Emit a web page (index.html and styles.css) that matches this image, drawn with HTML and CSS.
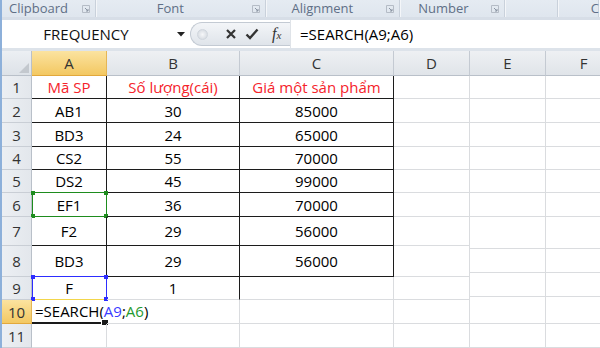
FILE: index.html
```html
<!DOCTYPE html>
<html lang="vi">
<head>
    <meta charset="UTF-8">
    <title>SEARCH</title>
    <link rel="stylesheet" href="styles.css">
</head>
<body>
<div class="app">
    <div class="ribbon">
        <div class="group g-clip"><span class="glabel">Clipboard</span><svg class="launch" width="8" height="8" viewBox="0 0 8 8"><path d="M0.5 0.5h7v7h-7z" fill="none" stroke="#b5bcc6"/><path d="M3 3l3 3M6 4v2h-2" fill="none" stroke="#8a94a2"/></svg></div>
        <div class="group g-font"><span class="glabel">Font</span><svg class="launch" width="8" height="8" viewBox="0 0 8 8"><path d="M0.5 0.5h7v7h-7z" fill="none" stroke="#b5bcc6"/><path d="M3 3l3 3M6 4v2h-2" fill="none" stroke="#8a94a2"/></svg></div>
        <div class="group g-align"><span class="glabel">Alignment</span><svg class="launch" width="8" height="8" viewBox="0 0 8 8"><path d="M0.5 0.5h7v7h-7z" fill="none" stroke="#b5bcc6"/><path d="M3 3l3 3M6 4v2h-2" fill="none" stroke="#8a94a2"/></svg></div>
        <div class="group g-num"><span class="glabel">Number</span><svg class="launch" width="8" height="8" viewBox="0 0 8 8"><path d="M0.5 0.5h7v7h-7z" fill="none" stroke="#b5bcc6"/><path d="M3 3l3 3M6 4v2h-2" fill="none" stroke="#8a94a2"/></svg></div>
        <div class="group g-blank"></div>
        <div class="group g-last"><span class="glabel">C</span></div>
    </div>

    <div class="fbar">
        <div class="namebox">
            <span class="nametext">FREQUENCY</span>
            <svg class="drop" width="8" height="5" viewBox="0 0 8 5"><path d="M0 0h8l-4 4.5z" fill="#222"/></svg>
        </div>
        <div class="fbtns">
            <span class="grip"></span>
            <svg class="ico" width="12" height="12" viewBox="0 0 12 12"><path d="M2 2l8 8M10 2l-8 8" stroke="#333" stroke-width="2.2"/></svg>
            <svg class="ico" width="14" height="12" viewBox="0 0 14 12"><path d="M1.5 6.5l3.5 3.5 7.5-8.5" fill="none" stroke="#333" stroke-width="2.4"/></svg>
            <span class="fx">f<small>x</small></span>
        </div>
        <div class="formula">=SEARCH(A9;A6)</div>
    </div>

    <div class="sheet">
        <div class="c corner"><svg width="10" height="10" viewBox="0 0 10 10"><path d="M10 0v10h-10z" fill="#c3c8ce"/></svg></div>
        <div class="c ch sel">A</div>
        <div class="c ch">B</div>
        <div class="c ch">C</div>
        <div class="c ch">D</div>
        <div class="c ch">E</div>
        <div class="c ch">F</div>

        <div class="c rh">1</div>
        <div class="c hd br bb">Mã SP</div>
        <div class="c hd br bb">Số lượng(cái)</div>
        <div class="c hd br bb">Giá một sản phẩm</div>
        <div class="c"></div><div class="c"></div><div class="c"></div>

        <div class="c rh">2</div>
        <div class="c br bb">AB1</div>
        <div class="c br bb">30</div>
        <div class="c br bb">85000</div>
        <div class="c"></div><div class="c"></div><div class="c"></div>

        <div class="c rh">3</div>
        <div class="c br bb">BD3</div>
        <div class="c br bb">24</div>
        <div class="c br bb">65000</div>
        <div class="c"></div><div class="c"></div><div class="c"></div>

        <div class="c rh">4</div>
        <div class="c br bb">CS2</div>
        <div class="c br bb">55</div>
        <div class="c br bb">70000</div>
        <div class="c"></div><div class="c"></div><div class="c"></div>

        <div class="c rh">5</div>
        <div class="c br bb">DS2</div>
        <div class="c br bb">45</div>
        <div class="c br bb">99000</div>
        <div class="c"></div><div class="c"></div><div class="c"></div>

        <div class="c rh">6</div>
        <div class="c br bb ref">EF1
            <span class="range green"><i class="tl"></i><i class="tr"></i><i class="bl"></i><i class="br-h"></i></span>
        </div>
        <div class="c br bb">36</div>
        <div class="c br bb">70000</div>
        <div class="c"></div><div class="c"></div><div class="c"></div>

        <div class="c rh">7</div>
        <div class="c br bb">F2</div>
        <div class="c br bb">29</div>
        <div class="c br bb">56000</div>
        <div class="c"></div><div class="c nob"></div><div class="c nob"></div>

        <div class="c rh">8</div>
        <div class="c br bb">BD3</div>
        <div class="c br bb">29</div>
        <div class="c br bb">56000</div>
        <div class="c"></div><div class="c nob shift8"></div><div class="c nob shift8"></div>

        <div class="c rh">9</div>
        <div class="c br yb ref">F
            <span class="range blue"><i class="tl"></i><i class="tr"></i><i class="bl"></i><i class="br-h"></i></span>
        </div>
        <div class="c br">1</div>
        <div class="c"></div>
        <div class="c"></div><div class="c nob shift9"></div><div class="c nob shift9"></div>

        <div class="c rh sel">10</div>
        <div class="c active left"><span class="edit">=SEARCH(<span class="r-blue">A9</span>;<span class="r-green">A6</span>)</span><i class="fill"></i></div>
        <div class="c"></div>
        <div class="c"></div>
        <div class="c"></div><div class="c"></div><div class="c"></div>

        <div class="c rh">11</div>
        <div class="c"></div>
        <div class="c"></div>
        <div class="c"></div>
        <div class="c"></div><div class="c"></div><div class="c"></div>
    </div>
</div>
</body>
</html>
```

FILE: styles.css
```css
body {
    margin: 0;
    padding: 0;
    background: #ffffff;
    font-family: 'Open Sans', 'Liberation Sans', sans-serif;
    overflow: hidden;
}
.app {
    width: 598px;
    height: 348px;
    border-left: 2px solid #8db0da;
    overflow: hidden;
}

/* ribbon group labels */
.ribbon {
    display: flex;
    height: 17px;
    background: linear-gradient(#e5ebf2, #dfe6ee);
    border-bottom: 3px solid #d7dee7;
}
.group {
    position: relative;
    display: flex;
    align-items: center;
    height: 17px;
    border-right: 1px solid #f4f6f9;
    box-shadow: inset -1px 0 0 #c9d1db;
}
.glabel {
    font-size: 13px;
    color: #5f6f86;
    line-height: 17px;
}
.launch {
    margin-left: auto;
    margin-right: 6px;
}
.g-clip { width: 95px; padding-left: 7px; box-sizing: border-box; }
.g-font { width: 171px; padding-left: 60px; box-sizing: border-box; }
.g-align { width: 134px; padding-left: 24px; box-sizing: border-box; }
.g-num { width: 105px; padding-left: 17px; box-sizing: border-box; }
.g-blank { width: 52px; }
.g-last { flex: 1; padding-left: 32px; }

/* formula bar */
.fbar {
    display: flex;
    height: 28px;
    background: #ffffff;
    border-bottom: 3px solid #dde3ea;
}
.namebox {
    width: 188px;
    display: flex;
    align-items: center;
    padding-left: 1px;
    box-sizing: border-box;
}
.nametext {
    flex: 1;
    text-align: center;
    font-size: 15px;
    color: #111;
    padding-right: 8px;
}
.drop {
    margin-right: 5px;
}
.fbtns {
    width: 100px;
    height: 24px;
    margin-top: 2px;
    display: flex;
    align-items: center;
    background: linear-gradient(#f3f5f8, #dfe4ea);
    border: 1px solid #c3cad3;
    border-right: none;
    border-radius: 12px 0 0 12px;
    box-sizing: border-box;
}
.grip {
    width: 9px;
    height: 9px;
    border-radius: 50%;
    margin-left: 6px;
    margin-right: 17px;
    background: radial-gradient(#f6f7f9, #cfd5dc);
    border: 1px solid #d0d6dd;
}
.ico {
    margin-right: 8px;
}
.fx {
    font-family: 'Liberation Serif', serif;
    font-style: italic;
    font-size: 16px;
    color: #333;
    margin-left: 5px;
}
.fx small {
    font-size: 11px;
}
.formula {
    flex: 1;
    font-size: 15px;
    color: #000;
    line-height: 28px;
    padding-left: 9px;
    border-left: 1px solid #dfe3e8;
}

/* worksheet */
.sheet {
    display: grid;
    grid-template-columns: 30px 75px 133px 154px 76px 76px 76px;
    grid-template-rows: 25px 23px 24px 24px 23px 23px 24px 29px 31px 23px 24px 24px;
}
.c {
    position: relative;
    display: flex;
    align-items: center;
    justify-content: center;
    box-sizing: border-box;
    border-right: 1px solid #dadcdf;
    border-bottom: 1px solid #dadcdf;
    font-size: 15px;
    color: #000;
    white-space: nowrap;
}
.corner {
    background: linear-gradient(#eceff3, #dde2e8);
    border-right: 1px solid #b9c0c9;
    border-bottom: 1px solid #b9c0c9;
    align-items: flex-end;
    justify-content: flex-end;
    padding: 0 2px 2px 0;
}
.ch {
    background: linear-gradient(#eef0f3, #e0e4e9);
    border-right: 1px solid #c4cad2;
    border-bottom: 1px solid #b9c0c9;
    color: #333;
}
.rh {
    background: linear-gradient(90deg, #eceff3, #e3e7ec);
    border-right: 1px solid #b9c0c9;
    border-bottom: 1px solid #c9ced5;
    color: #333;
}
.sel {
    background: linear-gradient(#fbe3a0, #f3c862);
    border-right-color: #e5b656;
    border-bottom-color: #e2a83c;
}
.hd {
    color: #f5232b;
}
.br {
    border-right: 1px solid #1c1c1c;
}
.bb {
    border-bottom: 1px solid #1c1c1c;
}
.yb {
    border-bottom: 1px solid #f2d64b;
}
.nob {
    border-bottom: none;
}
.shift8 {
    background:
        linear-gradient(#dadcdf, #dadcdf) no-repeat 0 2px / 100% 1px,
        linear-gradient(#dadcdf, #dadcdf) no-repeat 0 26px / 100% 1px;
}
.shift9 {
    background: linear-gradient(#dadcdf, #dadcdf) no-repeat 0 19px / 100% 1px;
}
.left {
    justify-content: flex-start;
    padding-left: 3px;
}
.active {
    border-right: none;
    border-bottom: 2px solid #1a1a1a;
    margin-right: 4px;
}
.edit .r-blue { color: #3a3aff; }
.edit .r-green { color: #1f9a2f; }
.fill {
    position: absolute;
    right: -6px;
    bottom: -4px;
    width: 6px;
    height: 5px;
    background: #1a1a1a;
    border: 1px solid #fff;
}

/* reference ranges drawn over the cells */
.range {
    position: absolute;
    left: 0;
    top: -1px;
    right: -1px;
    bottom: -1px;
    border: 1px solid;
}
.range.green { border-color: #1e8c1e; }
.range.blue { border-color: #2d2dff; border-bottom-color: transparent; }
.range i {
    position: absolute;
    width: 4px;
    height: 4px;
}
.range.green i { background: #1e8c1e; }
.range.blue i { background: #2d2dff; }
.range .tl { left: -2px; top: -2px; }
.range .tr { right: -2px; top: -2px; }
.range .bl { left: -2px; bottom: -2px; }
.range .br-h { right: -2px; bottom: -2px; }
```
